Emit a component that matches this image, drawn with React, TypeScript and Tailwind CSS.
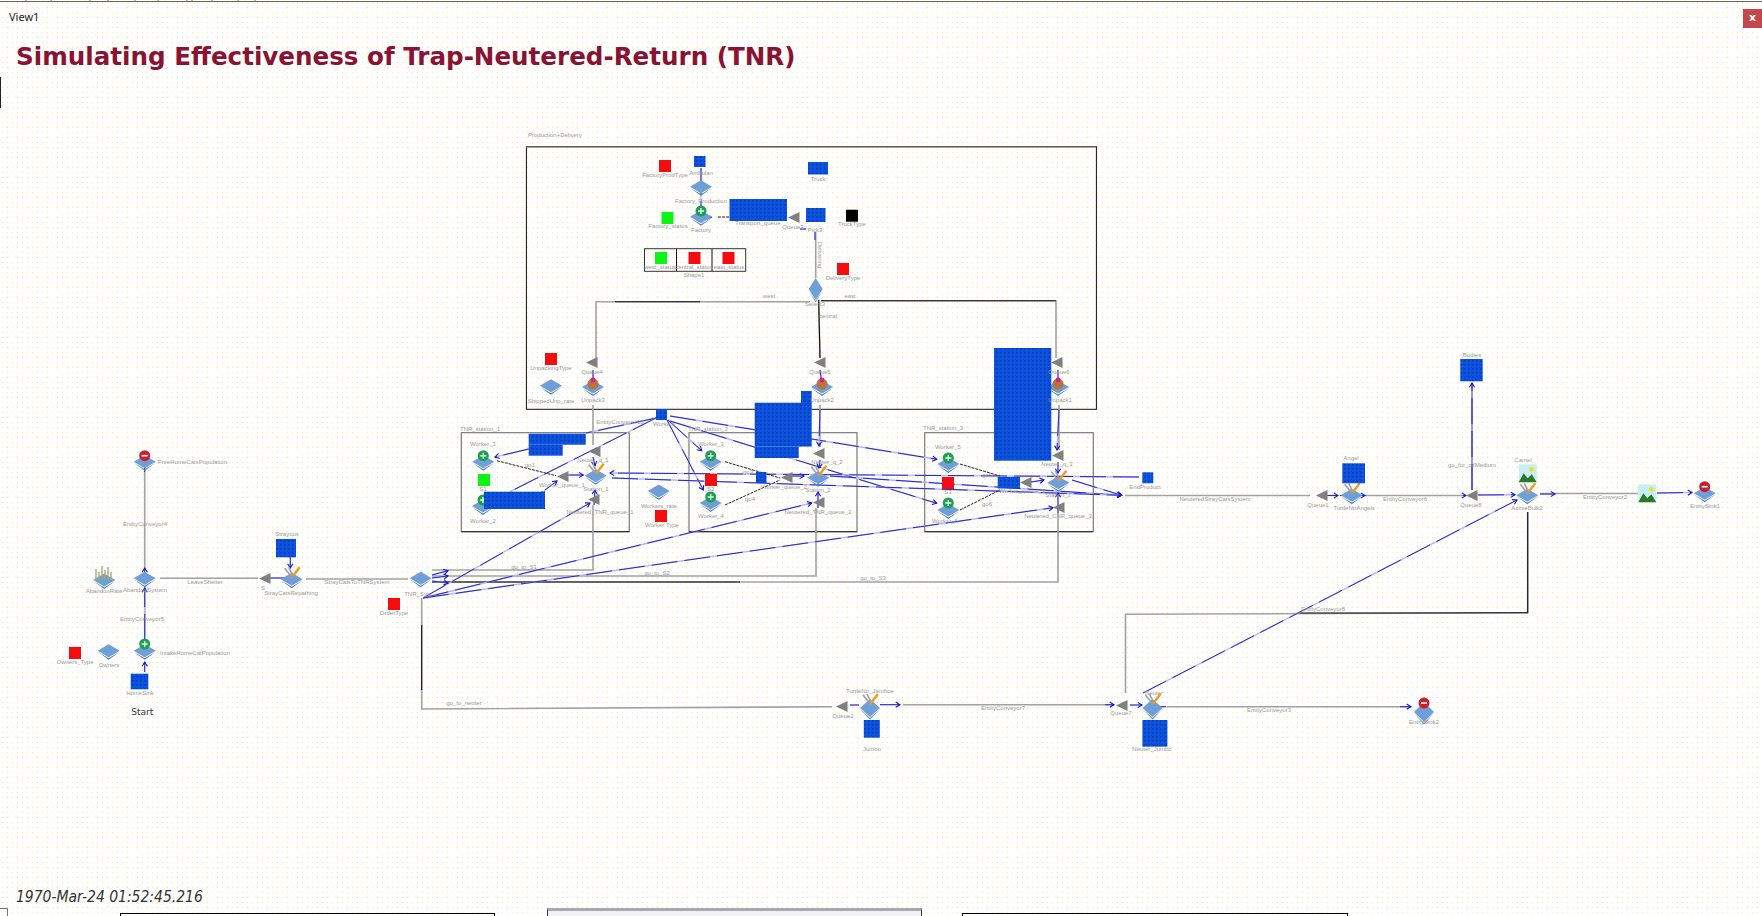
import React from 'react';

type Pt = [number, number];
const LABEL = [
  [528, 135, 'Production+Delivery', 'start'], [665, 175, 'FactoryProdType'], [701, 173, 'Ambulan'],
  [701, 201, 'Factory_Production'], [701, 230, 'Factory'], [668, 226, 'Factory_status'], [818, 179, 'Truck'],
  [852, 224, 'TruckType'], [793, 227, 'Queue3'], [815, 230, 'Pick3'], [735, 223, 'Transport_queue', 'start'],
  [660, 267, 'west_status'], [694, 267, 'central_status'], [729, 267, 'east_status'], [694, 275, 'Shape1'],
  [843, 278, 'DeliveryType'], [815, 304, 'Select3'], [769, 296, 'west'], [850, 296, 'east'], [828, 316, 'central'],
  [551, 368, 'UnpackingType'], [551, 401, 'ShippedUnp_rate'], [592, 372, 'Queue4'], [820, 372, 'Queue5'], [1059, 372, 'Queue6'],
  [593, 400, 'Unpack3'], [822, 400, 'Unpack2'], [1060, 400, 'Unpack1'], [620, 422, 'EntityConveyor10'], [664, 424, 'Workers'],
  [480, 429, 'TNR_station_1'], [708, 429, 'TNR_station_2'], [943, 428, 'TNR_station_3'], [483, 444, 'Worker_1'], [483, 489, 'S1'],
  [483, 521, 'Worker_2'], [530, 465, 'go1'], [562, 485, 'Worker_queue_1'], [593, 460, 'Neuter_q_1'], [596, 489, 'Station_1'],
  [600, 512, 'Neutered_TNR_queue_1'], [659, 506, 'Workers_rate'], [662, 525, 'Worker Type'], [711, 444, 'Worker_3'], [711, 489, 'S2'],
  [711, 516, 'Worker_4'], [748, 472, 'go3'], [750, 499, 'go4'], [784, 487, 'Worker_queue_2'], [827, 462, 'Neuter_q_2'], [818, 490, 'Station_2'],
  [818, 512, 'Neutered_TNR_queue_2'], [948, 447, 'Worker_5'], [948, 492, 'S3'], [945, 521, 'Worker_6'], [987, 475, 'go5'], [987, 504, 'go6'],
  [1022, 491, 'Worker_queue_3'], [1057, 464, 'Neuter_q_3'], [1058, 495, 'Station_3'], [1058, 516, 'Neutered_CNR_queue_3'], [1145, 487, 'EndProduct'],
  [1215, 499, 'NeuteredStrayCatsSystem'], [1318, 505, 'Queue1'], [1354, 508, 'TurtleNtrAngels'], [1351, 458, 'Angel'], [1405, 499, 'EntityConveyor6'],
  [1471, 505, 'Queue8'], [1472, 355, 'Bodies'], [1472, 465, 'go_for_cdMedium'], [1527, 508, 'ActiveBulk2'], [1523, 460, 'Camel'],
  [1605, 497, 'EntityConveyor2'], [1705, 506, 'EntitySink1'], [158, 462, 'FreeHomeCatsPopulation', 'start'], [145, 524, 'EntityConveyor4'],
  [142, 619, 'EntityConveyor5'], [145, 590, 'AbandonSystem'], [104, 591, 'AbandonRate'], [160, 653, 'IntakeHomeCatPopulation', 'start'],
  [75, 662, 'Owners_Type'], [109, 665, 'Owners'], [140, 693, 'HomeSink'], [205, 582, 'LeaveShelter'], [263, 588, 'S'], [291, 593, 'StrayCatsRepathing'],
  [287, 534, 'Strayous'], [357, 582, 'StrayCatsToTNRSystem'], [417, 594, 'TNR_Sys'], [394, 613, 'OrderType'], [524, 567, 'go_to_S1'], [657, 573, 'go_to_S2'],
  [873, 578, 'go_to_S3'], [464, 703, 'go_to_neuter'], [843, 716, 'Queue2'], [870, 691, 'TurtleNtr_Jamboe'], [872, 749, 'Jumbo'], [1003, 708, 'EntityConveyor7'],
  [1121, 713, 'Queue7'], [1154, 693, 'Neuter'], [1152, 749, 'Neuter_Jumbo'], [1269, 710, 'EntityConveyor3'], [1424, 722, 'EntitySink2'], [1323, 609, 'EntityConveyor8'],
] as [number, number, string, string?][];

// gray connectors, with the black runs the gif left on them
const CONVEYORS: { p: Pt[]; dark?: Pt[] }[] = [
  { p: [[815.7, 232], [815.7, 278]] },
  { p: [[810, 301.7], [596, 301.7], [596, 358]], dark: [[615, 301.7], [700, 301.7]] },
  { p: [[821, 300.7], [1056, 300.7], [1056, 358]], dark: [[821, 300.7], [1056, 300.7]] },
  { p: [[818.7, 300], [820, 358]], dark: [[818.7, 300], [820, 358]] },
  { p: [[593, 405], [593, 445]] },
  { p: [[820, 405], [820, 447]] },
  { p: [[1059, 405], [1059, 450]] },
  { p: [[432, 570], [593, 570], [593, 505]] },
  { p: [[432, 576], [816, 576], [816, 508]] },
  { p: [[432, 582], [1058, 582], [1058, 513]], dark: [[432, 582], [540, 582], [673, 582], [740, 582]] },
  { p: [[421.7, 598], [421.7, 709], [832, 706.7]], dark: [[421.7, 625], [421.7, 690]] },
  { p: [[144.7, 470], [144.7, 570]] },
  { p: [[144.7, 587], [144.7, 637]] },
  { p: [[160, 578.3], [258, 578.3]] },
  { p: [[306, 579], [408, 579]] },
  { p: [[1125, 495.5], [1310, 495.5]] },
  { p: [[1365, 495.5], [1463, 495.5]] },
  { p: [[1472, 490], [1472, 383]], dark: [[1472, 383], [1472, 490]] },
  { p: [[1540, 493.5], [1638, 493.5]] },
  { p: [[1527.7, 512], [1527.7, 612.7], [1125.5, 614.3], [1125.5, 693]], dark: [[1527.7, 512], [1527.7, 612.7], [1395, 613], [1300, 613]] },
  { p: [[903, 704.7], [1113, 704.7]] },
  { p: [[1167, 706.7], [1411, 706.7]] },
];

// blue links: from, to, and whether the end has an arrow
const LINKS: [number, number, number, number, boolean?][] = [
  [656, 418, 586, 433], [656, 418, 510, 491.7], [668, 420, 701.7, 450.7, true], [667, 420, 703.3, 490, true],
  [670, 416, 936.7, 459.3, true], [670, 421, 936.7, 503.3, true],
  [423, 598, 590, 503, true], [423, 598, 811.7, 503, true], [423, 598, 1053, 507.7, true],
  [432, 575, 448, 570.7, true], [432, 578, 448, 576, true], [432, 581, 448, 583, true],
  [528.7, 449, 495, 457, true], [545, 490, 557, 481, true], [568.3, 475, 583.3, 475, true], [791, 476, 804, 476, true],
  [1031, 482, 1044, 480, true], [1139, 477, 610, 473, true], [830, 476, 1121.7, 495.3, true], [612, 478, 1121.7, 495.3, true],
  [1072, 480, 1121.7, 495.3, true], [820, 410, 819, 446, true], [1059, 410, 1057, 450, true], [593, 457, 595, 466, true], [820, 460, 819, 468, true],
  [1058, 462, 1058, 473, true], [594, 505, 595, 490, true], [818, 508, 818, 492, true], [1058, 513, 1058, 493, true],
  [593, 385, 593, 370], [822, 385, 820, 370], [1058, 385, 1058, 370], [800, 229, 806, 229], [1463, 495.5, 1466, 495.5, true],
  [1340, 495.5, 1365, 495.5, true], [1327, 495.5, 1338, 495.5, true], [1478, 495, 1515, 494.7, true], [1540, 494, 1555, 494, true],
  [1657, 493, 1692, 492.5, true], [1143, 693, 1517, 500, true], [1166, 706.7, 1156, 706.7], [1400, 706.7, 1411, 706.7, true],
  [880, 704.7, 900, 704.7, true], [859, 705, 850, 705], [1105, 704.7, 1114, 704.7, true], [1130, 705, 1142, 705, true],
  [144.7, 472, 144.7, 462, true], [144.7, 575, 144.7, 568, true], [144.7, 640, 144.7, 588, true], [144.7, 672, 144.7, 662, true], [285, 578, 270, 578],
  [290.3, 557, 290.3, 568, true], [1472, 490, 1472, 383, true], [701, 168, 701, 210], [815, 240, 815, 232], [702, 221, 712, 217],
];

const DASHED: [number, number, number, number][] = [
  [497, 460.7, 556, 475.7], [725, 461.7, 780, 478], [725, 505, 780, 480], [960, 464, 1000, 476], [960, 510, 1000, 490],
  [718, 217, 729, 217], [498, 506, 545, 491],
];

const RED: Pt[] = [[659, 160], [545, 353], [655, 510], [705, 474], [942, 477], [388, 598], [69, 647], [837, 263], [688.5, 252], [722.5, 252]];
const GREEN: Pt[] = [[661.5, 212], [478, 474], [655, 252]];
const QUEUES: Pt[] = [
  [586, 357], [814, 357], [1051, 357], [788, 212], [557, 471], [589, 446], [588, 494], [781, 472], [813, 448], [813, 497],
  [1020, 477], [1052, 450], [1053, 502], [1316, 490], [1466, 490], [259, 573], [836, 701], [1116, 700],
];
const BLOCKS: [number, number, number, number][] = [
  [729.5, 199, 57.5, 22], [806, 208, 19.5, 14], [808, 162, 20, 12.5], [694, 156, 11.5, 11], [656, 409, 11, 11], [528.7, 433.7, 57, 11], [528.7, 444.7, 34, 11],
  [484, 491.7, 61, 17.3], [756, 472, 10.5, 11], [994, 348, 57.3, 112.7], [997.7, 477, 22.3, 11.5], [1142.3, 472.3, 11, 11], [1342.3, 463.3, 22.7, 20],
  [1460.3, 359, 22.4, 22.3], [276, 539, 20, 18.3], [130.7, 673.7, 17.6, 15.6], [863.8, 720, 16, 17.7], [1142.4, 720, 25, 26.7],
  [754.7, 402.7, 57, 43.9], [754.7, 446.6, 44, 11.4], [801, 391, 10.7, 12],
];

function Diamond({ x, y, w = 22, h = 13 }: { x: number; y: number; w?: number; h?: number }) {
  return (
    <g>
      <polygon points={`${x - w / 2},${y + 1} ${x},${y + h / 2 + 1} ${x + w / 2},${y + 1} ${x},${y + h / 2 + 2.5}`} fill="#4b7fb8" />
      <polygon points={`${x - w / 2},${y} ${x},${y - h / 2} ${x + w / 2},${y} ${x},${y + h / 2}`} fill="#6f9fd6" />
    </g>
  );
}

function Plus({ x, y }: { x: number; y: number }) {
  return (
    <g>
      <circle cx={x} cy={y} r={5.5} fill="#1f9d55" />
      <path d={`M${x - 3} ${y}H${x + 3}M${x} ${y - 3}V${y + 3}`} stroke="#d8ffe0" strokeWidth={1.4} />
    </g>
  );
}

function Minus({ x, y }: { x: number; y: number }) {
  return (
    <g>
      <circle cx={x} cy={y} r={5.5} fill="#c8202c" />
      <path d={`M${x - 3} ${y}H${x + 3}`} stroke="#fff" strokeWidth={1.6} />
    </g>
  );
}

function Tools({ x, y }: { x: number; y: number }) {
  return (
    <g>
      <path d={`M${x - 7} ${y - 11}L${x + 1} ${y - 1}M${x - 3} ${y - 12}L${x + 2} ${y - 2}`} stroke="#a0a0a8" strokeWidth={1.6} />
      <path d={`M${x + 8} ${y - 12}L${x + 1} ${y - 3}`} stroke="#f09a20" strokeWidth={2.4} />
    </g>
  );
}

function Shop({ x, y }: { x: number; y: number }) {
  return (
    <g>
      <circle cx={x} cy={y - 3} r={5.5} fill="#b8743c" />
      <circle cx={x} cy={y - 7} r={2.4} fill="#d8208c" />
    </g>
  );
}

function Picture({ x, y }: { x: number; y: number }) {
  return (
    <g>
      <rect x={x} y={y} width={18} height={18} fill="#c8f0f4" />
      <circle cx={x + 13} cy={y + 5} r={2.4} fill="#f4e020" />
      <polygon points={`${x},${y + 18} ${x + 5},${y + 9} ${x + 9},${y + 14} ${x + 13},${y + 10} ${x + 18},${y + 18}`} fill="#2a7a2a" />
    </g>
  );
}

const TOOL_NODES: Pt[] = [
  [595.7, 475.7], [818.3, 477.7], [1058.3, 482.7], [1351.7, 495.3], [291.7, 579.3], [1527.3, 495.3],
];

export default function App() {
  return (
    <div className="relative flex h-[916px] w-[1762px] flex-col overflow-hidden bg-white [background-image:radial-gradient(circle,#f8f29a_0.55px,transparent_0.8px),radial-gradient(circle,#d4d2f2_0.55px,transparent_0.8px)] [background-position:0_0,2.5px_2.5px] [background-size:5px_5px,10px_10px]">
      <svg viewBox="0 0 300 3" className="h-[3px] w-[300px] shrink-0">
        <path d="M0 1.5H300" stroke="#6a6a5c" strokeWidth={1} />
        <path d="M26 0V1M51 0V1M90 0V1M108 0V1M135 0V1M158 0V1M187 0V1M192 0V1M212 0V1M238 0V1M255 0V1" stroke="#777" strokeWidth={1} />
      </svg>
      <div className="absolute top-[1px] right-0 left-[300px] h-px bg-[#6a6a5c]" />
      <div className="absolute top-[77px] left-0 h-[31px] w-px bg-[#222]" />
      <div className="flex h-[25px] shrink-0 items-start justify-between pt-[6px]">
        <span className="pl-[9px] font-['Noto_Sans',sans-serif] text-[11px] leading-[16px] text-[#222]">View1</span>
        <div className="flex h-[19px] w-[19px] items-center justify-center bg-[#c4474c] font-['DejaVu_Sans',sans-serif] text-[11px] font-bold text-white">x</div>
      </div>
      <h1 className="h-[92px] shrink-0 pt-[14px] pl-[16px] font-['DejaVu_Sans',sans-serif] text-[24.6px] leading-[30px] font-bold text-[#8a1233]">
        Simulating Effectiveness of Trap-Neutered-Return (TNR)
      </h1>
      <svg viewBox="0 120 1762 768" className="h-[768px] w-[1762px] shrink-0">
        <defs>
          <pattern id="cells" width="4" height="4" patternUnits="userSpaceOnUse">
            <rect width="4" height="4" fill="#0a50dc" />
            <rect width="2" height="2" fill="#0b45c0" />
            <rect x="2" y="2" width="1" height="1" fill="#1a62ee" />
          </pattern>
        </defs>

        <rect x={526.4} y={146.7} width={570} height={262.6} fill="none" stroke="#111" strokeWidth={1} />
        <line x1={526} y1={147} x2={1096} y2={147} stroke="#808060" strokeWidth={1} />
        {[461.3, 689, 924.7].map((x) => (
          <g key={x}>
            <rect x={x} y={432.7} width={x === 924.7 ? 168.6 : 168} height={99} fill="none" stroke="#7a7a7a" strokeWidth={1.2} />
            <line x1={x} y1={531.7} x2={x + 168} y2={531.7} stroke="#222" strokeWidth={1} />
          </g>
        ))}
        <rect x={644.5} y={248.7} width={101.2} height={22.6} fill="none" stroke="#333" strokeWidth={1} />
        <path d="M676.5 249V271M712 249V271" stroke="#111" strokeWidth={1} />

        {CONVEYORS.map((c, i) => (
          <g key={i} fill="none">
            <polyline points={c.p.map((q) => q.join(',')).join(' ')} stroke="#a2a2a2" strokeWidth={1.6} />
            {c.dark && <polyline points={c.dark.map((q) => q.join(',')).join(' ')} stroke="#111" strokeWidth={1.1} />}
          </g>
        ))}

        {LINKS.map(([a, b, c, d, head], i) => {
          const ang = Math.atan2(d - b, c - a);
          const wing = (t: number) => `${c - 5 * Math.cos(ang + t)},${d - 5 * Math.sin(ang + t)}`;
          return (
            <g key={i} fill="none">
              <line x1={a} y1={b} x2={c} y2={d} stroke="#b4b6f2" strokeWidth={1.4} />
              <line x1={a} y1={b} x2={c} y2={d} stroke="#1414c4" strokeWidth={0.9} strokeDasharray="26 7" />
              {head && <polyline points={`${wing(0.55)} ${c},${d} ${wing(-0.55)}`} stroke="#1414c4" strokeWidth={1.1} />}
            </g>
          );
        })}
        {DASHED.map(([a, b, c, d], i) => (
          <line key={i} x1={a} y1={b} x2={c} y2={d} stroke="#222" strokeWidth={1} strokeDasharray="3 1" />
        ))}

        {QUEUES.map(([x, y]) => (
          <polygon key={`${x}-${y}`} points={`${x},${y + 5.5} ${x + 11.5},${y} ${x + 11.5},${y + 11}`} fill="#808080" />
        ))}

        {/* factory */}
        <Diamond x={701} y={186.7} />
        <Diamond x={701} y={216.7} />
        <Plus x={701} y={211} />
        <Diamond x={815.7} y={289} w={14} h={22} />
        <Diamond x={551} y={385.7} />
        <Diamond x={593} y={387} />
        <Shop x={593} y={387} />
        <Diamond x={822} y={387} />
        <Shop x={822} y={387} />
        <Diamond x={1058} y={387} />
        <Shop x={1058} y={387} />

        {/* stations */}
        <Diamond x={483.3} y={461.7} />
        <Plus x={483.3} y={455.7} />
        <Diamond x={483} y={506} />
        <Plus x={483} y={500} />
        <Diamond x={710.7} y={461.7} />
        <Plus x={710.7} y={455.7} />
        <Diamond x={710.7} y={503} />
        <Plus x={710.7} y={497} />
        <Diamond x={948.3} y={464} />
        <Plus x={948.3} y={458} />
        <Diamond x={948.3} y={510} />
        <Plus x={948.3} y={503} />
        <Diamond x={658.7} y={491} />
        {TOOL_NODES.map(([x, y]) => (
          <g key={x}>
            <Diamond x={x} y={y} />
            <Tools x={x} y={y} />
          </g>
        ))}

        {/* left column */}
        <Diamond x={144.7} y={461.7} />
        <Minus x={144.7} y={455.7} />
        <Diamond x={144.7} y={578.3} />
        <Diamond x={420.7} y={578.3} />
        <Diamond x={104.3} y={580} />
        <path d="M96 580V569M99 580V572M102 580V566M105 580V570M108 580V567M111 580V572" stroke="#a8a878" strokeWidth={1.4} />
        <Diamond x={144.7} y={650.7} />
        <Plus x={144.7} y={644} />
        <Diamond x={108.7} y={650.7} />

        {/* right column and bottom row */}
        <Diamond x={1704.7} y={493.3} />
        <Minus x={1704.7} y={486.7} />
        <Picture x={1518.7} y={464.3} />
        <Picture x={1638.3} y={484.3} />
        <Diamond x={870} y={708} w={20} h={18} />
        <Tools x={870} y={706} />
        <Diamond x={1152.5} y={708} w={20} h={18} />
        <Tools x={1152.5} y={706} />
        <Diamond x={1424} y={712} w={20} h={20} />
        <Minus x={1424} y={703} />

        {RED.map(([x, y]) => (
          <rect key={`${x}-${y}`} x={x} y={y} width={12} height={12} fill="#f40c10" />
        ))}
        {GREEN.map(([x, y]) => (
          <rect key={`${x}-${y}`} x={x} y={y} width={12} height={12} fill="#0cf414" />
        ))}
        <rect x={846} y={209.7} width={12} height={12} fill="#000" />
        {BLOCKS.map(([x, y, w, h]) => (
          <rect key={`${x}-${y}`} x={x} y={y} width={w} height={h} fill="url(#cells)" />
        ))}

        <text x={820} y={257} transform="rotate(90 820 255)" textAnchor="middle" className="fill-[#9a9a9a] font-['Liberation_Sans',sans-serif] text-[6px]">Delivering</text>
        {LABEL.map(([x, y, t, anchor]) => (
          <text key={`${t}-${x}`} x={x} y={y + 2} textAnchor={anchor === 'start' ? 'start' : 'middle'} className="fill-[#9a9a9a] font-['Liberation_Sans',sans-serif] text-[6px]">
            {t}
          </text>
        ))}
        <text x={142.3} y={715} textAnchor="middle" className="fill-[#333] font-['DejaVu_Sans',sans-serif] text-[9px]">Start</text>
      </svg>
      <div className="h-[20px] shrink-0 pl-[16px] font-['DejaVu_Sans_Condensed','DejaVu_Sans',sans-serif] text-[15.5px] leading-[18px] text-[#333] italic">
        1970-Mar-24 01:52:45.216
      </div>
      <div className="flex h-[8px] shrink-0 items-end">
        <div className="h-[8px] w-[8px] border-t border-r border-[#777]" />
        <div className="ml-[112px] h-[3px] w-[375px] border-x border-t border-black" />
        <div className="ml-[52px] h-[8px] w-[375px] border-x border-t-[3px] border-x-[#333] border-t-[#a8a8b0] bg-[#f2f2f4]" />
        <div className="ml-[40px] h-[3px] w-[386px] border-x border-t border-black" />
      </div>
    </div>
  );
}
